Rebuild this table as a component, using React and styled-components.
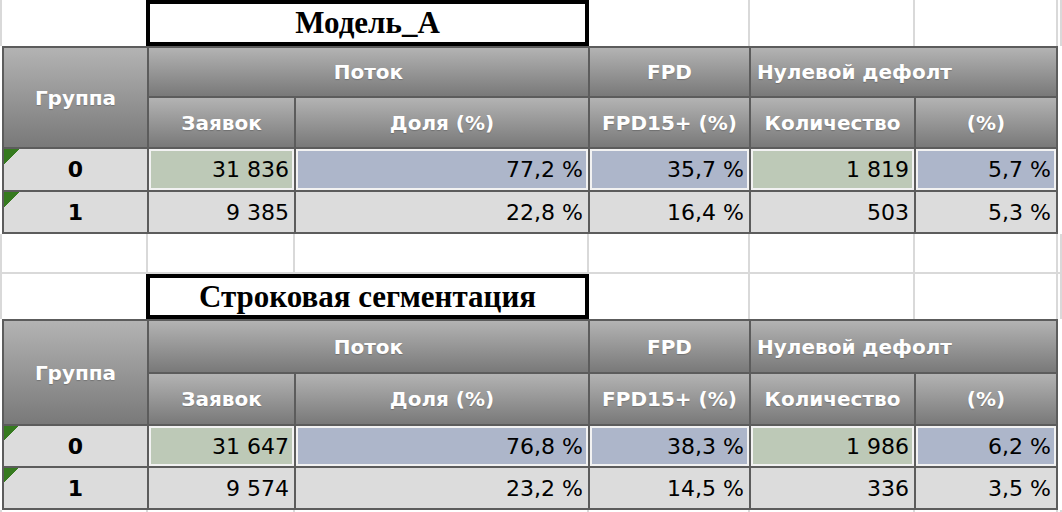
import React from "react";
import styled, { createGlobalStyle } from "styled-components";

const GlobalStyle = createGlobalStyle`
  body {
    margin: 0;
    background: #ffffff;
    font-family: "DejaVu Sans", Verdana, sans-serif;
  }
`;

const GRID = "#d9d9d9";

const Sheet = styled.div`
  width: 1062px;
  display: flex;
  flex-direction: column;
`;

const SheetRow = styled.div`
  display: grid;
  grid-template-columns: 146px 147px 294px 161px 165px 143px 1fr;
  height: ${(props) => props.$h}px;
  border-left: 2px solid ${GRID};
`;

const Blank = styled.div`
  border-right: 2px solid ${GRID};
  border-bottom: ${(props) => (props.$line ? `2px solid ${GRID}` : "none")};
`;

const TitleBox = styled.div`
  grid-column: span 2;
  margin-left: -2px;
  border: 4px solid #000;
  background: #fff;
  display: flex;
  align-items: center;
  justify-content: center;
  font-family: "Liberation Serif", "Times New Roman", serif;
  font-weight: bold;
  font-size: 31px;
  color: #000;
`;

const Table = styled.div`
  display: grid;
  grid-template-columns: 143px 145px 292px 159px 163px 140px;
  grid-template-rows: ${(props) => props.$rows};
  gap: 2px;
  padding: 2px;
  margin-left: 2px;
  width: fit-content;
  background: #5c5c5c;
`;

const HeadCell = styled.div`
  grid-column: span ${(props) => props.$span || 1};
  grid-row: span ${(props) => props.$rowSpan || 1};
  display: flex;
  align-items: center;
  justify-content: ${(props) => (props.$left ? "flex-start" : "center")};
  padding-left: ${(props) => (props.$left ? "6px" : "0")};
  background: linear-gradient(#b3b3b3, #797979);
  color: #ffffff;
  font-weight: bold;
  font-size: 20px;
  text-shadow: 0 1px 1px rgba(0, 0, 0, 0.2);
  white-space: nowrap;
`;

const GroupCell = styled.div`
  display: flex;
  align-items: center;
  justify-content: center;
  background:
    linear-gradient(135deg, #367a1f 50%, transparent 50%) 0 0 / 15px 15px no-repeat,
    #dcdcdc;
  font-weight: bold;
  font-size: 22px;
  color: #000;
`;

const FILLS = {
  green: "#bdc9b7",
  blue: "#adb6ca",
};

const NumCell = styled.div`
  box-sizing: border-box;
  display: flex;
  align-items: center;
  justify-content: flex-end;
  padding-right: 3px;
  border: 2px solid ${(props) => (props.$fill ? "#f2f2f2" : "transparent")};
  background: ${(props) => FILLS[props.$fill] || "#dcdcdc"};
  font-size: 22px;
  color: #000;
  white-space: nowrap;
`;

const rowFills = ["green", "blue", "blue", "green", "blue"];

const blocks = [
  {
    title: "Модель_А",
    titleHeight: 46,
    rows: "48px 49px 41px 40px",
    data: [
      ["0", "31 836", "77,2 %", "35,7 %", "1 819", "5,7 %"],
      ["1", "9 385", "22,8 %", "16,4 %", "503", "5,3 %"],
    ],
  },
  {
    title: "Строковая сегментация",
    titleHeight: 45,
    rows: "51px 50px 40px 40px",
    data: [
      ["0", "31 647", "76,8 %", "38,3 %", "1 986", "6,2 %"],
      ["1", "9 574", "23,2 %", "14,5 %", "336", "3,5 %"],
    ],
  },
];

const TitleRow = ({ title, height }) => (
  <SheetRow $h={height}>
    <Blank />
    <TitleBox>{title}</TitleBox>
    <Blank />
    <Blank />
    <Blank />
    <Blank />
  </SheetRow>
);

const EmptyRow = ({ height }) => (
  <SheetRow $h={height}>
    {[0, 1, 2, 3, 4, 5, 6].map((i) => (
      <Blank key={i} $line />
    ))}
  </SheetRow>
);

const StatsTable = ({ rows, data }) => (
  <Table $rows={rows}>
    <HeadCell $rowSpan={2}>Группа</HeadCell>
    <HeadCell $span={2}>Поток</HeadCell>
    <HeadCell>FPD</HeadCell>
    <HeadCell $span={2} $left>
      Нулевой дефолт
    </HeadCell>
    <HeadCell>Заявок</HeadCell>
    <HeadCell>Доля (%)</HeadCell>
    <HeadCell>FPD15+ (%)</HeadCell>
    <HeadCell>Количество</HeadCell>
    <HeadCell>(%)</HeadCell>
    {data.map((row, index) => (
      <React.Fragment key={row[0]}>
        <GroupCell>{row[0]}</GroupCell>
        {row.slice(1).map((value, col) => (
          <NumCell key={col} $fill={index === 0 ? rowFills[col] : undefined}>
            {value}
          </NumCell>
        ))}
      </React.Fragment>
    ))}
  </Table>
);

export default function App() {
  return (
    <>
      <GlobalStyle />
      <Sheet>
        {blocks.map((block, i) => (
          <React.Fragment key={block.title}>
            {i > 0 && <EmptyRow height={40} />}
            <TitleRow title={block.title} height={block.titleHeight} />
            <StatsTable rows={block.rows} data={block.data} />
          </React.Fragment>
        ))}
        <SheetRow $h={2}>
          {[0, 1, 2, 3, 4, 5, 6].map((i) => (
            <Blank key={i} />
          ))}
        </SheetRow>
      </Sheet>
    </>
  );
}
